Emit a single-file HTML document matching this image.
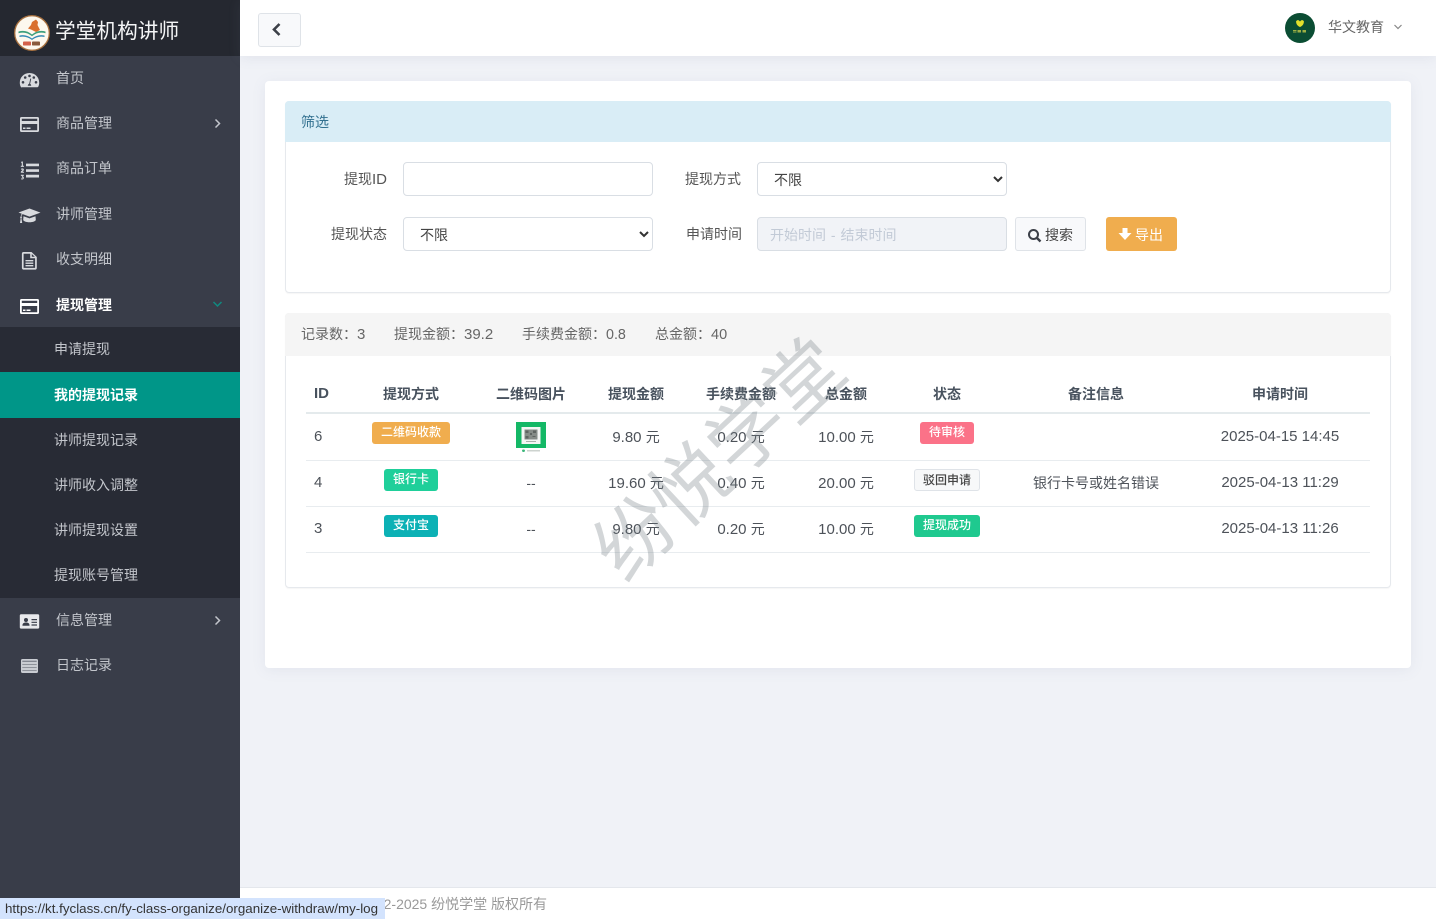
<!DOCTYPE html>
<html lang="zh-CN"><head><meta charset="utf-8"><title>我的提现记录</title>
<style>
*{box-sizing:border-box}
html,body{margin:0;padding:0;width:1436px;height:919px;overflow:hidden;background:#f0f2f7;font-family:"Liberation Sans","Noto Sans CJK SC",sans-serif;font-size:14px;color:#4d5259}
.a{position:absolute}
.t{position:absolute;white-space:nowrap;line-height:20px;height:20px}
.c{transform:translateX(-50%)}
.m{color:#c3c6cc;left:56px}
.s{color:#c3c6cc;left:54px}
.i{position:absolute;left:19px;width:21px;height:21px;fill:#d8dade}
.th{font-weight:700;color:#48525e}
.lb{position:absolute;height:22px;line-height:21px;border-radius:3px;color:#fff;font-size:12px;text-align:center;font-weight:500}
.f{position:absolute;background:#fff;border:1px solid #d9dee4;border-radius:4px;height:34px;width:250px}
.sel{padding-left:16px;line-height:34px;color:#444}
.lab{position:absolute;line-height:20px;text-align:right;color:#555;white-space:nowrap}
.n{font-size:15px}
.y{font-size:14px}
</style></head><body>

<div class="a" style="left:0;top:0;width:240px;height:919px;background:#393d49"></div>
<div class="a" style="left:0;top:0;width:240px;height:56px;background:#252830"></div>
<svg class="a" style="left:14px;top:15px" width="36" height="36" viewBox="0 0 36 36">
<circle cx="18" cy="18" r="17.300" fill="#fdf8ee" stroke="#a8713f" stroke-width="1.300"/>
<path d="M18 7l4-2.500 2 2.500-.5 3 2.500 5-4 2-5-2.500-3-1 3-3.500z" fill="#d9702f"/>
<path d="M4.500 16.500c5-1.500 9.500-.5 13.500 3 4-3.500 8.500-4.500 13.500-3v1.800c-5-1.500-9.500-.5-13.500 3-4-3.500-8.500-4.500-13.500-3z" fill="#3c9f7c"/>
<path d="M5.500 20.500c4.500-1 8.500 0 12.500 3 4-3 8-4 12.500-3v1.500c-4.500-1-8.500 0-12.500 3-4-3-8-4-12.500-3z" fill="#3489b5"/>
<rect x="9" y="26.500" width="8" height="4" rx=".8" fill="#d4604a"/>
<rect x="18" y="26.500" width="8" height="4" rx=".8" fill="#8a5a3c"/>
</svg>
<div class="t" style="left:55px;top:19px;height:26px;line-height:26px;font-size:20.700px;color:#f4f5f6">学堂机构讲师</div>

<svg class="i" style="top:70px" viewBox="0 0 21 21"><path d="M10.500 3C4.900 3 .8 7.300.8 12.700c0 1.500.3 2.700.9 3.900.2.400.6.600 1 .6h15.600c.4 0 .8-.2 1-.6.6-1.200.9-2.400.9-3.900C20.200 7.300 16.100 3 10.500 3zM4 13.600a1.300 1.300 0 1 1 0-2.600 1.300 1.300 0 0 1 0 2.600zM6.200 8.800a1.300 1.300 0 1 1 0-2.600 1.300 1.300 0 0 1 0 2.600zm4.300-1.600a1.300 1.300 0 1 1 0-2.600 1.300 1.300 0 0 1 0 2.600zm1.700 8.500H8.800c0-.9.600-1.700 1.400-1.900l1.100-5.300.9.200-1.100 5.200c.6.300 1.100 1 1.100 1.800zm2.600-6.900a1.300 1.300 0 1 1 0-2.600 1.300 1.300 0 0 1 0 2.600zm2.200 4.800a1.300 1.300 0 1 1 0-2.600 1.300 1.300 0 0 1 0 2.600z"/></svg>
<svg class="i" style="top:114px" viewBox="0 0 21 21"><path fill-rule="evenodd" d="M2.500 3h16c.9 0 1.500.6 1.500 1.500v12c0 .9-.6 1.500-1.500 1.500h-16C1.600 18 1 17.400 1 16.500v-12C1 3.600 1.600 3 2.500 3zm.3 1.800V7h15.400V4.800zm0 5.200v6.200h15.400V10zM4 13.500h2.500V15H4zm3.500 0h4V15h-4z"/></svg>
<svg class="i" style="top:160px" viewBox="0 0 21 21"><path d="M7 3.600h13v2.700H7zM7 9.200h13v2.700H7zM7 14.800h13v2.700H7zM2.500 1.500h1.400v4.200h1v1.200H1.800V5.700h1V2.900l-.8.300zM1.900 9.200c.2-1 3-1.200 3 .5 0 1-1.100 1.400-1.500 2h1.600v1.100H1.800v-.9c.5-1 1.700-1.500 1.700-2.100 0-.5-.8-.4-1.200 0zM1.900 14.800h2.900v.8l-.9.900c1.500.3 1.300 3-.7 3-.5 0-1-.1-1.300-.4l.4-.9c.5.400 1.500.4 1.500-.2 0-.4-.6-.5-1-.4v-.8l.8-.9H1.900z"/></svg>
<svg class="i" style="top:205px;left:18px;width:23px" viewBox="0 0 23 21"><path d="M11.500 3.500L.5 7.500l3.300 1.200c-.6.800-.9 1.700-1 2.800-.4.200-.6.600-.6 1 0 .4.200.7.500.9L2 18h2.200l-.8-4.600c.3-.2.500-.5.500-.9 0-.4-.2-.8-.5-1 .1-1 .5-1.900 1.300-2.400l6.800 2.500 11-4zM5.500 11.300l-.3 3.400c0 1.400 2.800 2.500 6.300 2.500s6.300-1.100 6.300-2.500l-.3-3.400-6 2.100z"/></svg>
<svg class="i" style="top:250px" viewBox="0 0 21 21"><path fill-rule="evenodd" d="M4.500 2h8l5.300 5v11c0 .8-.6 1.600-1.400 1.600H4.500c-.8 0-1.600-.8-1.600-1.600V3.600C2.900 2.600 3.700 2 4.500 2zm.1 1.700v14.200h11.500V8.300h-4.900V3.700zm8.200.3v2.800h3zM6.500 10h7.800v1.400H6.500zm0 2.500h7.800v1.400H6.500zm0 2.500h7.800v1.400H6.500z"/></svg>
<svg class="i" style="top:296px;fill:#fff" viewBox="0 0 21 21"><path fill-rule="evenodd" d="M2.500 3h16c.9 0 1.500.6 1.500 1.500v12c0 .9-.6 1.500-1.500 1.500h-16C1.600 18 1 17.400 1 16.500v-12C1 3.600 1.600 3 2.500 3zm.3 1.800V7h15.400V4.800zm0 5.200v6.200h15.400V10zM4 13.500h2.500V15H4zm3.500 0h4V15h-4z"/></svg>
<svg class="i" style="top:611px;fill:#e8e9ec" viewBox="0 0 21 21"><path fill-rule="evenodd" d="M2 3.200h17c.7 0 1.200.5 1.200 1.200v12c0 .7-.5 1.200-1.200 1.200H2c-.7 0-1.200-.5-1.200-1.200v-12c0-.7.500-1.200 1.200-1.200zm5 3.800a2 2 0 1 0 0 4 2 2 0 0 0 0-4zm-3.500 7.800h7c.3-2-1-3.300-3.500-3.300s-3.800 1.300-3.500 3.300zM12.500 8v1.200h5.500V8zm0 2.700v1.200h5.500v-1.200zm0 2.700v1.200h5.500v-1.200z"/></svg>
<svg class="i" style="top:656px;fill:#c9ccd2" viewBox="0 0 21 21"><rect x="2" y="3" width="17" height="14" rx="1.500"/><path d="M3.300 4.800h14.400v1H3.300zM3.300 8h14.400v.6H3.300zM3.300 11h14.400v.6H3.300zM3.300 14h14.400v.6H3.300z" fill="#6b6f7a"/></svg>

<div class="t m" style="top:68px">首页</div>
<div class="t m" style="top:113px">商品管理</div>
<div class="t m" style="top:158px">商品订单</div>
<div class="t m" style="top:204px">讲师管理</div>
<div class="t m" style="top:249px">收支明细</div>
<div class="t m" style="top:295px;color:#fff;font-weight:700">提现管理</div>
<div class="a" style="left:0;top:327px;width:240px;height:271px;background:#282b35"></div>
<div class="a" style="left:0;top:372px;width:240px;height:46px;background:#009688"></div>
<div class="t s" style="top:339px">申请提现</div>
<div class="t s" style="top:385px;color:#fff;font-weight:700">我的提现记录</div>
<div class="t s" style="top:430px">讲师提现记录</div>
<div class="t s" style="top:475px">讲师收入调整</div>
<div class="t s" style="top:520px">讲师提现设置</div>
<div class="t s" style="top:565px">提现账号管理</div>
<div class="t m" style="top:610px">信息管理</div>
<div class="t m" style="top:655px">日志记录</div>
<svg class="a" style="left:213px;top:118px" width="9" height="11" viewBox="0 0 9 11"><path d="M2.500 1.500l4 4-4 4" fill="none" stroke="#c3c6cc" stroke-width="1.500"/></svg>
<svg class="a" style="left:213px;top:615px" width="9" height="11" viewBox="0 0 9 11"><path d="M2.500 1.500l4 4-4 4" fill="none" stroke="#c3c6cc" stroke-width="1.500"/></svg>
<svg class="a" style="left:212px;top:300px" width="11" height="9" viewBox="0 0 11 9"><path d="M1.500 2l4 4 4-4" fill="none" stroke="#0f8a80" stroke-width="1.500"/></svg>

<div class="a" style="left:240px;top:0;width:1196px;height:56px;background:#fff;box-shadow:0 2px 12px rgba(120,130,160,.12)"></div>
<div class="a" style="left:258px;top:13px;width:43px;height:34px;background:#f8f9fb;border:1px solid #dfe3e8;border-radius:3px"></div>
<svg class="a" style="left:271px;top:22px" width="12" height="15" viewBox="0 0 12 15"><path d="M8.500 2L3 7.500l5.500 5.500" fill="none" stroke="#3c4048" stroke-width="2.600"/></svg>
<svg class="a" style="left:1285px;top:13px" width="30" height="30" viewBox="0 0 30 30"><circle cx="15" cy="15" r="15" fill="#0b4d33"/><path d="M15 8.500c.8-1 1.500-1.500 2.500-1.500.5.800.8 1 1.300.6.4 2.600-.6 5-3.800 6.400-3.200-1.400-4.200-3.800-3.800-6.400.5.400.8.200 1.300-.6 1 0 1.700.5 2.500 1.500z" fill="#e3e02b"/><path d="M8 17h3.500v1H8zM8 18.500h3.500v1H8zM12.500 17H16v2.500h-3.500zM17.500 17H21v2.500h-3.500z" fill="#9caf44"/></svg>
<div class="t" style="left:1328px;top:17px;color:#666">华文教育</div>
<svg class="a" style="left:1393px;top:23px" width="10" height="8" viewBox="0 0 10 8"><path d="M1.500 2l3.500 3.500L8.500 2" fill="none" stroke="#888" stroke-width="1.200"/></svg>

<div class="a" style="left:265px;top:81px;width:1146px;height:587px;background:#fff;border-radius:4px;box-shadow:0 2px 14px rgba(120,130,160,.1)"></div>

<div class="a" style="left:285px;top:101px;width:1106px;height:192px;border:1px solid #e6e9ed;border-radius:4px;box-shadow:0 1px 1px rgba(0,0,0,.04)"></div>
<div class="a" style="left:285px;top:101px;width:1106px;height:41px;background:#d9edf6;border-radius:4px 4px 0 0"></div>
<div class="t" style="left:301px;top:112px;color:#31708f;font-size:14px">筛选</div>

<div class="lab" style="right:1049px;top:169px">提现<span class="n">ID</span></div>
<div class="f" style="left:403px;top:162px"></div>
<div class="lab" style="right:695px;top:169px">提现方式</div>
<div class="f sel" style="left:757px;top:162px">不限</div>
<svg class="a" style="left:992px;top:175px" width="12" height="9" viewBox="0 0 12 9"><path d="M2 2l4 4 4-4" fill="none" stroke="#333" stroke-width="2"/></svg>
<div class="lab" style="right:1049px;top:224px">提现状态</div>
<div class="f sel" style="left:403px;top:217px">不限</div>
<svg class="a" style="left:638px;top:230px" width="12" height="9" viewBox="0 0 12 9"><path d="M2 2l4 4 4-4" fill="none" stroke="#333" stroke-width="2"/></svg>
<div class="lab" style="right:694px;top:224px">申请时间</div>
<div class="f" style="left:757px;top:217px;background:#f1f3f7;padding-left:12px;line-height:34px;color:#c2cad6;word-spacing:1px">开始时间 - 结束时间</div>
<div class="a" style="left:1015px;top:217px;width:71px;height:34px;background:#f8f9fb;border:1px solid #dfe3e8;border-radius:3px"></div>
<svg class="a" style="left:1027px;top:228px" width="15" height="15" viewBox="0 0 15 15"><circle cx="6.500" cy="6.500" r="4.500" fill="none" stroke="#3c4048" stroke-width="2"/><path d="M10 10l3.500 3.500" stroke="#3c4048" stroke-width="2.400"/></svg>
<div class="t" style="left:1045px;top:225px;color:#444">搜索</div>
<div class="a" style="left:1106px;top:217px;width:71px;height:34px;background:#f0ad4e;border-radius:3px"></div>
<svg class="a" style="left:1118px;top:227px" width="14" height="14" viewBox="0 0 14 14"><path d="M4.500 1h5v5h4l-6.500 7L.5 6h4z" fill="#fff"/></svg>
<div class="t" style="left:1135px;top:225px;color:#fff">导出</div>

<div class="a" style="left:285px;top:313px;width:1106px;height:275px;border:1px solid #e6e9ed;border-radius:4px;box-shadow:0 1px 1px rgba(0,0,0,.04)"></div>
<div class="a" style="left:285px;top:313px;width:1106px;height:43px;background:#f5f5f5;border-radius:4px 4px 0 0"></div>
<div class="t" style="left:301px;top:324px;color:#666">记录数：<span class="n">3</span></div>
<div class="t" style="left:394px;top:324px;color:#666">提现金额：<span class="n">39.2</span></div>
<div class="t" style="left:522px;top:324px;color:#666">手续费金额：<span style="font-size:14.300px">0.8</span></div>
<div class="t" style="left:655px;top:324px;color:#666">总金额：<span style="font-size:14.500px">40</span></div>

<div class="t th n" style="left:314px;top:384px">ID</div>
<div class="t th c" style="left:411px;top:384px">提现方式</div>
<div class="t th c" style="left:531px;top:384px">二维码图片</div>
<div class="t th c" style="left:636px;top:384px">提现金额</div>
<div class="t th c" style="left:741px;top:384px">手续费金额</div>
<div class="t th c" style="left:846px;top:384px">总金额</div>
<div class="t th c" style="left:947px;top:384px">状态</div>
<div class="t th c" style="left:1096px;top:384px">备注信息</div>
<div class="t th c" style="left:1280px;top:384px">申请时间</div>
<div class="a" style="left:306px;top:412px;width:1064px;height:2px;background:#e4eaec"></div>
<div class="a" style="left:306px;top:460px;width:1064px;height:1px;background:#e8ecef"></div>
<div class="a" style="left:306px;top:506px;width:1064px;height:1px;background:#e8ecef"></div>
<div class="a" style="left:306px;top:552px;width:1064px;height:1px;background:#e8ecef"></div>

<div class="t n" style="left:314px;top:427px">6</div>
<div class="lb" style="left:372px;top:422px;width:78px;background:#f0ad4e">二维码收款</div>
<svg class="a" style="left:516px;top:422px" width="30" height="31" viewBox="0 0 30 31"><rect width="30" height="26" fill="#14b866"/><rect x="5.500" y="5" width="19" height="17" fill="#f4f6f4"/><rect x="8.500" y="7.500" width="13" height="10" fill="#858c87"/><path d="M9.500 8.500h3v2.500h-3zM17 8.500h3v2.500h-3zM9.500 14h3v2.500h-3zM14 11h2v2h-2zM16.500 14h3v1h-3z" fill="#5e6561"/><rect x="10" y="19" width="10" height="1" fill="#aab0ac"/><rect x="6" y="27.500" width="3" height="2.500" rx="1.200" fill="#3db77b"/><rect x="11" y="28" width="13" height="1.500" fill="#cdd3cf"/></svg>
<div class="t c n" style="left:636px;top:427px">9.80 <span class="y">元</span></div>
<div class="t c n" style="left:741px;top:427px">0.20 <span class="y">元</span></div>
<div class="t c n" style="left:846px;top:427px">10.00 <span class="y">元</span></div>
<div class="lb" style="left:920px;top:422px;width:54px;background:#fb7288">待审核</div>
<div class="t c n" style="left:1280px;top:427px">2025-04-15 14:45</div>

<div class="t n" style="left:314px;top:473px">4</div>
<div class="lb" style="left:384px;top:469px;width:54px;background:#1fcf9a">银行卡</div>
<div class="t c" style="left:531px;top:473px">--</div>
<div class="t c n" style="left:636px;top:473px">19.60 <span class="y">元</span></div>
<div class="t c n" style="left:741px;top:473px">0.40 <span class="y">元</span></div>
<div class="t c n" style="left:846px;top:473px">20.00 <span class="y">元</span></div>
<div class="lb" style="left:914px;top:469px;width:66px;background:#f7f8f9;border:1px solid #dfe3e8;color:#444;line-height:20px">驳回申请</div>
<div class="t c" style="left:1096px;top:473px">银行卡号或姓名错误</div>
<div class="t c n" style="left:1280px;top:473px">2025-04-13 11:29</div>

<div class="t n" style="left:314px;top:519px">3</div>
<div class="lb" style="left:384px;top:515px;width:54px;background:#0cb1b5">支付宝</div>
<div class="t c" style="left:531px;top:519px">--</div>
<div class="t c n" style="left:636px;top:519px">9.80 <span class="y">元</span></div>
<div class="t c n" style="left:741px;top:519px">0.20 <span class="y">元</span></div>
<div class="t c n" style="left:846px;top:519px">10.00 <span class="y">元</span></div>
<div class="lb" style="left:914px;top:515px;width:66px;background:#1fc98f">提现成功</div>
<div class="t c n" style="left:1280px;top:519px">2025-04-13 11:26</div>

<div class="a" style="left:720px;top:460px;width:0;height:0"><div style="position:absolute;left:-200px;top:-60px;width:400px;height:120px;line-height:120px;text-align:center;white-space:nowrap;font-size:77px;font-weight:400;color:rgba(110,120,125,.3);transform:rotate(-43deg)">纷悦学堂</div></div>

<div class="a" style="left:240px;top:887px;width:1196px;height:32px;background:#fff;border-top:1px solid #e4e7ec"></div>
<div class="t" style="right:889px;top:894px;color:#999">© 2022-2025 纷悦学堂 版权所有</div>
<div class="a" style="left:0;top:898px;width:385px;height:21px;background:#d3e3fd;color:#333;font-size:13.350px;line-height:21px;padding-left:5px;white-space:nowrap;overflow:hidden">https://kt.fyclass.cn/fy-class-organize/organize-withdraw/my-log</div>
</body></html>
